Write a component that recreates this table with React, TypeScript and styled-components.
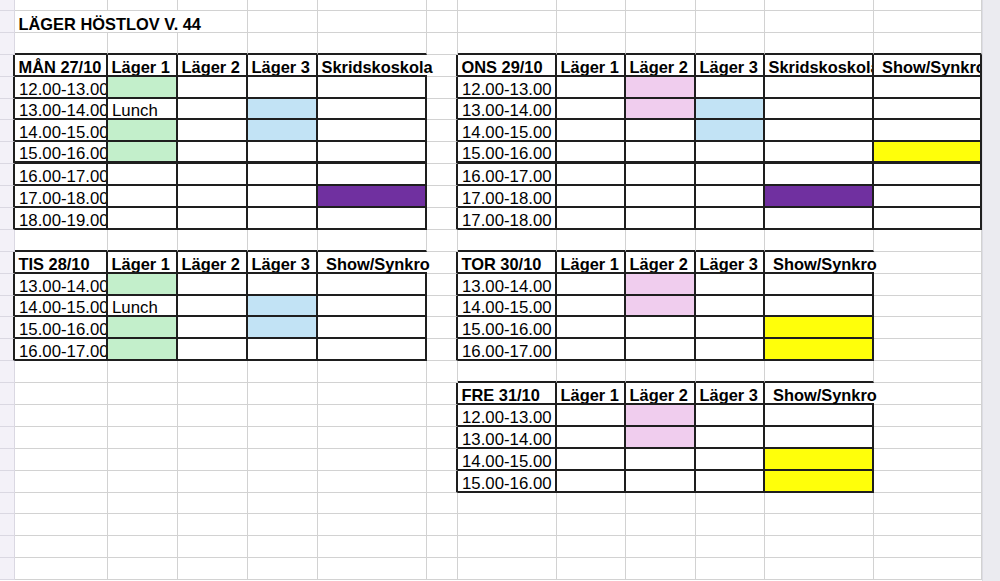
import React from 'react'
import styled, { createGlobalStyle } from 'styled-components'

type Line = 'light' | 'dark' | 'thick' | 'none'

type CellData = {
  text?: string
  bold?: boolean
  fill?: string
  spill?: boolean
  right: Line
  bottom: Line
}

type Table = {
  row: number
  col: number
  head: string[]
  body: string[][]
  spillLast: boolean
  thickAfter?: number
}

const COLS = [15, 93, 70, 70, 70, 109, 31, 99, 69, 70, 69, 109, 108]
const ROW_COUNT = 27

const FILLS: Record<string, string> = {
  G: '#c3efcb',
  B: '#c2e3f5',
  P: '#f0cdee',
  Y: '#ffff0a',
  V: '#7030a0',
}

const TABLES: Table[] = [
  {
    row: 3,
    col: 1,
    head: ['MÅN 27/10', 'Läger 1', 'Läger 2', 'Läger 3', 'Skridskoskola'],
    spillLast: true,
    thickAfter: 3,
    body: [
      ['12.00-13.00', 'G', '', '', ''],
      ['13.00-14.00', 'Lunch', '', 'B', ''],
      ['14.00-15.00', 'G', '', 'B', ''],
      ['15.00-16.00', 'G', '', '', ''],
      ['16.00-17.00', '', '', '', ''],
      ['17.00-18.00', '', '', '', 'V'],
      ['18.00-19.00', '', '', '', ''],
    ],
  },
  {
    row: 3,
    col: 7,
    head: ['ONS 29/10', 'Läger 1', 'Läger 2', 'Läger 3', 'Skridskoskola', ' Show/Synkro'],
    spillLast: false,
    thickAfter: 3,
    body: [
      ['12.00-13.00', '', 'P', '', '', ''],
      ['13.00-14.00', '', 'P', 'B', '', ''],
      ['14.00-15.00', '', '', 'B', '', ''],
      ['15.00-16.00', '', '', '', '', 'Y'],
      ['16.00-17.00', '', '', '', '', ''],
      ['17.00-18.00', '', '', '', 'V', ''],
      ['17.00-18.00', '', '', '', '', ''],
    ],
  },
  {
    row: 12,
    col: 1,
    head: ['TIS 28/10', 'Läger 1', 'Läger 2', 'Läger 3', ' Show/Synkro'],
    spillLast: true,
    body: [
      ['13.00-14.00', 'G', '', '', ''],
      ['14.00-15.00', 'Lunch', '', 'B', ''],
      ['15.00-16.00', 'G', '', 'B', ''],
      ['16.00-17.00', 'G', '', '', ''],
    ],
  },
  {
    row: 12,
    col: 7,
    head: ['TOR 30/10', 'Läger 1', 'Läger 2', 'Läger 3', ' Show/Synkro'],
    spillLast: true,
    body: [
      ['13.00-14.00', '', 'P', '', ''],
      ['14.00-15.00', '', 'P', '', ''],
      ['15.00-16.00', '', '', '', 'Y'],
      ['16.00-17.00', '', '', '', 'Y'],
    ],
  },
  {
    row: 18,
    col: 7,
    head: ['FRE 31/10', 'Läger 1', 'Läger 2', 'Läger 3', ' Show/Synkro'],
    spillLast: true,
    body: [
      ['12.00-13.00', '', 'P', '', ''],
      ['13.00-14.00', '', 'P', '', ''],
      ['14.00-15.00', '', '', '', 'Y'],
      ['15.00-16.00', '', '', '', 'Y'],
    ],
  },
]

// builds the whole sheet as a grid of cells with their border types
const buildSheet = (): CellData[][] => {
  const sheet: CellData[][] = Array.from({ length: ROW_COUNT }, () =>
    COLS.map(() => ({ right: 'light' as Line, bottom: 'light' as Line }))
  )

  // title spills over the next two columns
  sheet[1][1] = { ...sheet[1][1], text: 'LÄGER HÖSTLOV V. 44', bold: true, spill: true, right: 'none' }
  sheet[1][2].right = 'none'

  TABLES.forEach(t => {
    const last = t.col + t.head.length - 1
    for (let c = t.col; c <= last; c++) sheet[t.row - 1][c].bottom = 'dark'

    for (let r = t.row; r <= t.row + t.body.length; r++) {
      sheet[r][t.col - 1].right = 'dark'
      for (let c = t.col; c <= last; c++) {
        sheet[r][c].right = 'dark'
        sheet[r][c].bottom = 'dark'
      }
    }

    t.head.forEach((h, i) => {
      sheet[t.row][t.col + i].text = h
      sheet[t.row][t.col + i].bold = true
    })
    if (t.spillLast) {
      sheet[t.row][last].right = 'none'
      sheet[t.row][last].spill = true
    }

    t.body.forEach((cells, i) => {
      cells.forEach((v, j) => {
        const cell = sheet[t.row + 1 + i][t.col + j]
        if (FILLS[v]) cell.fill = FILLS[v]
        else if (v) cell.text = v
        if (t.thickAfter === i) cell.bottom = 'thick'
      })
    })
  })

  return sheet
}

const SHEET = buildSheet()

const App = () => {
  return (
    <Page>
      <GlobalStyle />
      <Sheet>
        {SHEET.map((row, r) =>
          row.map((cell, c) => (
            <Cell
              key={`${r}-${c}`}
              $gutter={c === 0}
              $right={cell.right}
              $bottom={cell.bottom}
              $fill={cell.fill}
              $bold={cell.bold}
              $spill={cell.spill}
            >
              {cell.text}
            </Cell>
          ))
        )}
      </Sheet>
      <Scrollbar />
    </Page>
  )
}

export default App

const GlobalStyle = createGlobalStyle`
  html, body {
    margin: 0;
    padding: 0;
    background: #fff;
    overflow: hidden;
  }
`

const lineStyle = (l: Line, gutter?: boolean) => {
  switch (l) {
    case 'dark':
      return '2px solid #1e1e1e'
    case 'thick':
      return '3px solid #1e1e1e'
    case 'none':
      return '0 none'
    default:
      return gutter ? '1px solid #dad8e2' : '1px solid #d2d2d2'
  }
}

const Page = styled.div`
  display: flex;
  width: 1000px;
  height: 581px;
  overflow: hidden;
  font-family: "Liberation Sans", Arial, sans-serif;
  font-size: 16.8px;
  color: #000;
`

const Sheet = styled.div`
  display: grid;
  grid-template-columns: ${COLS.map(w => `${w}px`).join(' ')};
  grid-template-rows: 11px repeat(${ROW_COUNT - 1}, 21.9px);
  width: 982px;
  flex-shrink: 0;
`

const Cell = styled.div<{
  $gutter?: boolean
  $right: Line
  $bottom: Line
  $fill?: string
  $bold?: boolean
  $spill?: boolean
}>`
  box-sizing: border-box;
  display: flex;
  align-items: flex-end;
  min-width: 0;
  padding-left: ${p => (p.$bold ? 3.5 : 4)}px;
  white-space: pre;
  line-height: 15px;
  overflow: ${p => (p.$spill ? 'visible' : 'hidden')};
  z-index: ${p => (p.$spill ? 1 : 'auto')};
  background: ${p => p.$fill ?? (p.$gutter ? '#f3f1f8' : '#fff')};
  border-right: ${p => lineStyle(p.$right, p.$gutter)};
  border-bottom: ${p => lineStyle(p.$bottom, p.$gutter)};
  font-weight: ${p => (p.$bold ? 700 : 400)};
  font-size: ${p => (p.$bold ? '16.4px' : 'inherit')};
`

const Scrollbar = styled.div`
  flex: 1;
  height: 100%;
  background: #ebebf0;
  border-left: 1px solid #dcdce3;
`
